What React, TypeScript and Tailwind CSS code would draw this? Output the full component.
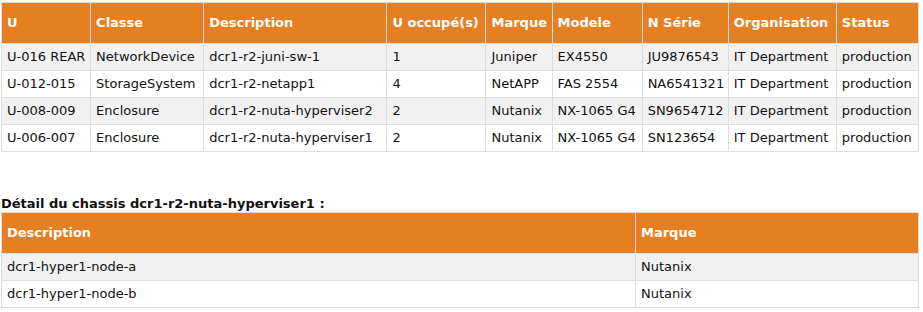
const rows = [
  ["U-016 REAR", "NetworkDevice", "dcr1-r2-juni-sw-1", "1", "Juniper", "EX4550", "JU9876543", "IT Department", "production"],
  ["U-012-015", "StorageSystem", "dcr1-r2-netapp1", "4", "NetAPP", "FAS 2554", "NA6541321", "IT Department", "production"],
  ["U-008-009", "Enclosure", "dcr1-r2-nuta-hyperviser2", "2", "Nutanix", "NX-1065 G4", "SN9654712", "IT Department", "production"],
  ["U-006-007", "Enclosure", "dcr1-r2-nuta-hyperviser1", "2", "Nutanix", "NX-1065 G4", "SN123654", "IT Department", "production"],
];

const headers = ["U", "Classe", "Description", "U occupé(s)", "Marque", "Modele", "N Série", "Organisation", "Status"];
const widths = ["w-[89px]", "w-[113px]", "w-[183px]", "w-[99px]", "w-[66px]", "w-[90px]", "w-[86px]", "w-[108px]", "w-[82px]"];

const nodes = [
  ["dcr1-hyper1-node-a", "Nutanix"],
  ["dcr1-hyper1-node-b", "Nutanix"],
];

function Th({ children, className = "" }: { children: React.ReactNode; className?: string }) {
  return (
    <th className={`border border-[#dddddd] bg-[#e67e22] px-[5px] py-3 text-left font-bold text-white leading-4 ${className}`}>
      {children}
    </th>
  );
}

function Td({ children }: { children: React.ReactNode }) {
  return <td className="border border-[#dddddd] px-[5px] py-[5px] leading-4 whitespace-nowrap">{children}</td>;
}

export default function App() {
  return (
    <div className="bg-white px-[1px] pt-[2px] text-[13px] text-[#111] font-['DejaVu_Sans',Verdana,sans-serif]">
      <table className="border-collapse table-fixed w-[918px]">
        <thead>
          <tr>
            {headers.map((h, i) => (
              <Th key={h} className={widths[i]}>{h}</Th>
            ))}
          </tr>
        </thead>
        <tbody>
          {rows.map((r, i) => (
            <tr key={i} className={i % 2 === 0 ? "bg-[#f1f1f1]" : "bg-white"}>
              {r.map((c, j) => <Td key={j}>{c}</Td>)}
            </tr>
          ))}
        </tbody>
      </table>

      <h3 className="mt-[44px] font-bold leading-4">Détail du chassis dcr1-r2-nuta-hyperviser1 :</h3>
      <table className="border-collapse table-fixed w-[918px]">
        <thead>
          <tr>
            <Th className="w-[634px]">Description</Th>
            <Th>Marque</Th>
          </tr>
        </thead>
        <tbody>
          {nodes.map((r, i) => (
            <tr key={i} className={i % 2 === 0 ? "bg-[#f1f1f1]" : "bg-white"}>
              {r.map((c, j) => <Td key={j}>{c}</Td>)}
            </tr>
          ))}
        </tbody>
      </table>
    </div>
  );
}
